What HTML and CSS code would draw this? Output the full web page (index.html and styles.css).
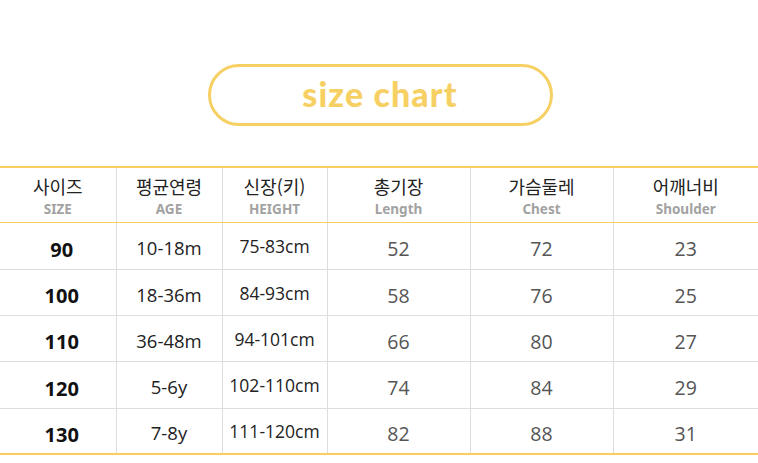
FILE: index.html
```html
<!DOCTYPE html>
<html lang="ko">
<head>
<meta charset="utf-8">
<link rel="stylesheet" href="styles.css">
</head>
<body>
<div class="page">
  <div class="title-wrap">
    <div class="pill">size chart</div>
  </div>
  <table class="chart">
    <colgroup>
      <col class="c1"><col class="c2"><col class="c3"><col class="c4"><col class="c5"><col class="c6">
    </colgroup>
    <thead>
      <tr>
        <th><span class="ko">사이즈</span><span class="en">SIZE</span></th>
        <th><span class="ko">평균연령</span><span class="en">AGE</span></th>
        <th><span class="ko">신장(키)</span><span class="en">HEIGHT</span></th>
        <th><span class="ko">총기장</span><span class="en">Length</span></th>
        <th><span class="ko">가슴둘레</span><span class="en">Chest</span></th>
        <th><span class="ko">어깨너비</span><span class="en">Shoulder</span></th>
      </tr>
    </thead>
    <tbody>
      <tr class="r47"><td class="size">90</td><td class="age">10-18m</td><td class="ht">75-83cm</td><td class="num">52</td><td class="num">72</td><td class="num">23</td></tr>
      <tr><td class="size">100</td><td class="age">18-36m</td><td class="ht">84-93cm</td><td class="num">58</td><td class="num">76</td><td class="num">25</td></tr>
      <tr><td class="size">110</td><td class="age">36-48m</td><td class="ht">94-101cm</td><td class="num">66</td><td class="num">80</td><td class="num">27</td></tr>
      <tr class="r47"><td class="size">120</td><td class="age">5-6y</td><td class="ht">102-110cm</td><td class="num">74</td><td class="num">84</td><td class="num">29</td></tr>
      <tr><td class="size">130</td><td class="age">7-8y</td><td class="ht">111-120cm</td><td class="num">82</td><td class="num">88</td><td class="num">31</td></tr>
    </tbody>
  </table>
</div>
</body>
</html>
```
FILE: styles.css
```css
html, body {
  margin: 0;
  padding: 0;
  background: #fff;
}
.page {
  width: 758px;
  height: 463px;
  overflow: hidden;
  font-family: "Open Sans", "Noto Sans CJK KR", sans-serif;
}
.title-wrap {
  display: flex;
  justify-content: center;
  padding-top: 64px;
  padding-left: 2px;
}
.pill {
  box-sizing: border-box;
  width: 345px;
  height: 62px;
  border: 3px solid #f7d064;
  border-radius: 31px;
  display: flex;
  align-items: center;
  justify-content: center;
  color: #f7d064;
  font-family: "Lato", sans-serif;
  font-weight: 900;
  font-size: 34px;
  letter-spacing: 1.1px;
  padding-bottom: 3px;
}
.chart {
  margin-top: 40px;
  width: 758px;
  border-collapse: collapse;
  table-layout: fixed;
  border-top: 2px solid #f8cf5f;
  border-bottom: 2px solid #f8cf5f;
}
.c1 { width: 116px; }
.c2 { width: 106px; }
.c3 { width: 105px; }
.c4 { width: 143px; }
.c5 { width: 143px; }
.c6 { width: 145px; }
.chart th, .chart td {
  padding: 0;
  text-align: center;
  border-left: 1px solid #dedede;
  border-top: 1px solid #dedede;
}
.chart th:first-child, .chart td:first-child { border-left: none; }
.chart thead tr { height: 55px; }
.chart thead th {
  border-top: none;
  border-bottom: 1px solid #f8cf5f;
  vertical-align: top;
  padding-top: 7px;
}
.chart tbody tr:first-child td { border-top: none; }
.chart tbody tr { height: 46px; }
.chart tbody tr.r47 { height: 47px; }
.ko {
  display: block;
  font-family: "Noto Sans CJK KR", sans-serif;
  font-weight: 400;
  font-size: 18px;
  line-height: 22px;
  color: #222;
}
.en {
  display: block;
  margin-top: 3px;
  font-family: "Noto Sans", sans-serif;
  font-weight: 700;
  font-size: 13.5px;
  line-height: 18px;
  color: #a2a2a2;
}
.size {
  font-weight: 700;
  font-size: 20px;
  color: #111;
  padding-left: 8px !important;
  padding-top: 7px !important;
}
.age {
  font-size: 18.5px;
  color: #222;
  padding-top: 4px !important;
}
.ht {
  font-size: 17.5px;
  color: #222;
  padding-top: 1px !important;
}
.num {
  font-size: 19.5px;
  color: #555;
  padding-top: 6px !important;
}
```
